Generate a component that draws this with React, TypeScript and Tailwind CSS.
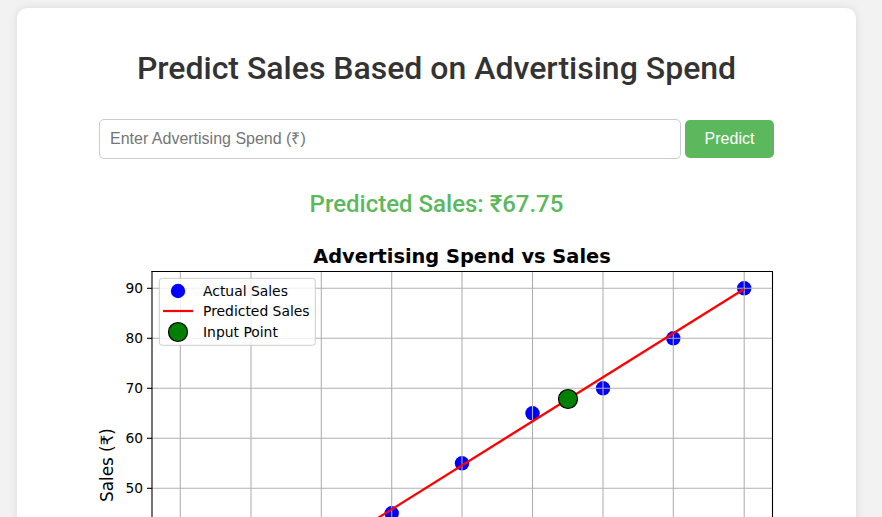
import React from "react";

const gx = [180.3, 251, 321.3, 391.7, 462, 532.5, 603, 673.3, 744.2];
const gyVals = [90, 80, 70, 60, 50, 40, 30, 20];
const labelVals = [90, 80, 70, 60, 50];
const yOf = (v: number) => 288.3 + (90 - v) * 5;
const actual: [number, number][] = [
  [180.3, 20],
  [251, 30],
  [321.3, 35],
  [391.7, 45],
  [462, 55],
  [532.5, 65],
  [603, 70],
  [673.3, 80],
  [744.2, 90],
];

function Chart() {
  const font = "'DejaVu Sans', sans-serif";
  return (
    <svg width={684} height={420} viewBox="90 240 684 420" className="block">
      <defs>
        <clipPath id="ax">
          <rect x={152} y={271.5} width={620.5} height={400} />
        </clipPath>
      </defs>
      <text x={462} y={263} textAnchor="middle" fontFamily={font} fontWeight="bold" fontSize={19.4} fill="#000">
        Advertising Spend vs Sales
      </text>
      <rect x={152} y={271.5} width={620.5} height={400} fill="#fff" />
      <g clipPath="url(#ax)">
        {actual.map(([x, v], i) => (
          <circle key={i} cx={x} cy={yOf(v)} r={7.2} fill="#0000ff" />
        ))}
        {gx.map((x) => (
          <line key={x} x1={x} x2={x} y1={271} y2={700} stroke="#b0b0b0" strokeWidth={1.1} />
        ))}
        {gyVals.map((v) => (
          <line key={v} x1={152} x2={773} y1={yOf(v)} y2={yOf(v)} stroke="#b0b0b0" strokeWidth={1.1} />
        ))}
        <line x1={180.3} y1={641.5} x2={744.2} y2={289} stroke="#ff0000" strokeWidth={2.2} />
        <circle cx={568} cy={399} r={9.5} fill="#008000" stroke="#000" strokeWidth={1.2} />
      </g>
      <line x1={152} x2={152} y1={271} y2={700} stroke="#000" strokeWidth={1.1} />
      <line x1={772.5} x2={772.5} y1={271} y2={700} stroke="#000" strokeWidth={1.1} />
      <line x1={151.5} x2={773} y1={271.5} y2={271.5} stroke="#000" strokeWidth={1.1} />
      {gyVals.map((v) => (
        <line key={v} x1={147} x2={152} y1={yOf(v)} y2={yOf(v)} stroke="#000" strokeWidth={1.1} />
      ))}
      {labelVals.map((v) => (
        <text key={v} x={143} y={yOf(v) + 5} textAnchor="end" fontFamily={font} fontSize={13.8} fill="#000">
          {v}
        </text>
      ))}
      <text
        x={113}
        y={465}
        transform="rotate(-90 113 465)"
        textAnchor="middle"
        fontFamily={font}
        fontSize={16.8}
        fill="#000"
      >
        Sales (₹)
      </text>
      <rect x={159.3} y={278.3} width={156} height={67} rx={3} fill="#fff" fillOpacity={0.8} stroke="#cccccc" strokeWidth={1} />
      <circle cx={178} cy={291} r={7.2} fill="#0000ff" />
      <text x={203} y={295.5} fontFamily={font} fontSize={13.9} fill="#000">Actual Sales</text>
      <line x1={163} x2={193} y1={311} y2={311} stroke="#ff0000" strokeWidth={2.2} />
      <text x={203} y={316} fontFamily={font} fontSize={13.9} fill="#000">Predicted Sales</text>
      <circle cx={178} cy={332} r={9.5} fill="#008000" stroke="#000" strokeWidth={1.2} />
      <text x={203} y={336.5} fontFamily={font} fontSize={13.9} fill="#000">Input Point</text>
    </svg>
  );
}

export default function App() {
  return (
    <div className="min-h-[517px] bg-[#f2f2f2] pt-[8px] pl-[17px]" style={{ fontFamily: "Roboto, sans-serif" }}>
      <div className="w-[839px] bg-white rounded-[10px] shadow-[0_0_10px_rgba(0,0,0,0.1)] pt-[41px] pb-[20px] flex flex-col items-center">
        <h1 className="text-[32px] leading-[38px] font-medium text-[#333] font-[Roboto,sans-serif]">
          Predict Sales Based on Advertising Spend
        </h1>
        <div className="mt-[32px] flex items-center gap-[4px] w-[675px]">
          <input
            type="text"
            placeholder="Enter Advertising Spend (₹)"
            className="w-[582px] h-[40px] border border-[#ccc] rounded-[5px] px-[10px] text-[16px] font-['Liberation_Sans',Arial,sans-serif] placeholder:text-[#757575] outline-none"
          />
          <button className="w-[89px] h-[38px] bg-[#5cb85c] text-white rounded-[5px] text-[16px] font-['Liberation_Sans',Arial,sans-serif]">
            Predict
          </button>
        </div>
        <div className="mt-[31px] text-[24px] leading-[28px] font-medium text-[#5cb85c] font-[Roboto,sans-serif]">
          Predicted Sales: ₹67.75
        </div>
        <div className="mt-[22px] ml-[-9px]">
          <Chart />
        </div>
      </div>
    </div>
  );
}
